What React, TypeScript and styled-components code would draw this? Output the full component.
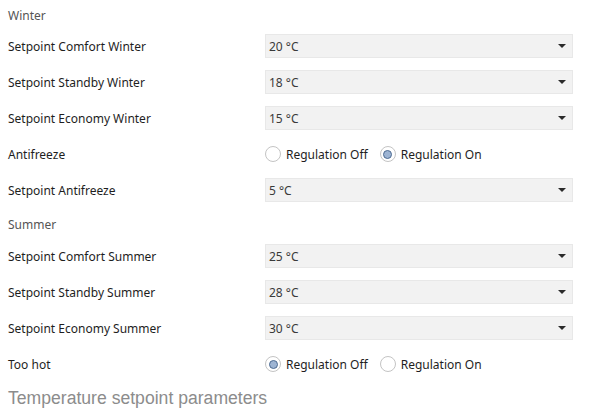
import React, { useState } from 'react';
import styled, { createGlobalStyle } from 'styled-components';

const GlobalStyle = createGlobalStyle`
  html, body {
    margin: 0;
    padding: 0;
    background: #ffffff;
  }
`;

const Page = styled.div`
  width: 607px;
  height: 409px;
  padding: 0 8px;
  box-sizing: border-box;
  font-family: 'Noto Sans', 'Open Sans', sans-serif;
  display: flex;
  flex-direction: column;
  overflow: hidden;
`;

const GroupTitle = styled.div<{ $height: number; $pad: number }>`
  height: ${(p) => p.$height}px;
  padding-top: ${(p) => p.$pad}px;
  box-sizing: border-box;
  font-size: 12px;
  color: #555555;
  display: flex;
  align-items: center;
`;

const Row = styled.div`
  height: 36px;
  display: grid;
  grid-template-columns: 257px 308px;
  align-items: center;
`;

const Label = styled.div`
  font-size: 12px;
  color: #1e1e1e;
`;

const Select = styled.div`
  height: 24px;
  box-sizing: border-box;
  background: #f2f2f2;
  border: 1px solid #e8e8e8;
  display: flex;
  align-items: center;
  justify-content: space-between;
  padding: 0 6px 0 3px;
  font-size: 12px;
  color: #3a3a3a;
`;

const Arrow = styled.span`
  width: 0;
  height: 0;
  border-left: 4px solid transparent;
  border-right: 4px solid transparent;
  border-top: 4px solid #2a2a2a;
`;

const RadioGroup = styled.div`
  display: flex;
  align-items: center;
  gap: 12px;
`;

const RadioOption = styled.label`
  display: flex;
  align-items: center;
  gap: 5px;
  font-size: 12px;
  color: #1e1e1e;
  cursor: pointer;
`;

const RadioCircle = styled.span<{ $checked: boolean }>`
  width: 16px;
  height: 16px;
  box-sizing: border-box;
  border-radius: 50%;
  border: 1px solid #c4c4c4;
  background: #ffffff;
  display: flex;
  align-items: center;
  justify-content: center;
  &::after {
    content: '';
    display: ${(p) => (p.$checked ? 'block' : 'none')};
    width: 9px;
    height: 9px;
    box-sizing: border-box;
    border-radius: 50%;
    border: 1px solid #4d6b91;
    background: #9db4d3;
  }
`;

const Caption = styled.div`
  flex: 1;
  display: flex;
  align-items: center;
  padding-top: 5px;
  font-family: 'Liberation Sans', Arial, sans-serif;
  font-size: 17.6px;
  color: #8c8c8c;
`;

type Field =
  | { kind: 'select'; label: string; value: string }
  | { kind: 'radio'; label: string; on: boolean };

const winter: Field[] = [
  { kind: 'select', label: 'Setpoint Comfort Winter', value: '20 °C' },
  { kind: 'select', label: 'Setpoint Standby Winter', value: '18 °C' },
  { kind: 'select', label: 'Setpoint Economy Winter', value: '15 °C' },
  { kind: 'radio', label: 'Antifreeze', on: true },
  { kind: 'select', label: 'Setpoint Antifreeze', value: '5 °C' },
];

const summer: Field[] = [
  { kind: 'select', label: 'Setpoint Comfort Summer', value: '25 °C' },
  { kind: 'select', label: 'Setpoint Standby Summer', value: '28 °C' },
  { kind: 'select', label: 'Setpoint Economy Summer', value: '30 °C' },
  { kind: 'radio', label: 'Too hot', on: false },
];

function Regulation({ initial }: { initial: boolean }) {
  const [on, setOn] = useState(initial);
  return (
    <RadioGroup>
      <RadioOption onClick={() => setOn(false)}>
        <RadioCircle $checked={!on} />
        Regulation Off
      </RadioOption>
      <RadioOption onClick={() => setOn(true)}>
        <RadioCircle $checked={on} />
        Regulation On
      </RadioOption>
    </RadioGroup>
  );
}

function FieldRow({ field }: { field: Field }) {
  return (
    <Row>
      <Label>{field.label}</Label>
      {field.kind === 'select' ? (
        <Select>
          {field.value}
          <Arrow />
        </Select>
      ) : (
        <Regulation initial={field.on} />
      )}
    </Row>
  );
}

export default function App() {
  return (
    <>
      <GlobalStyle />
      <Page>
        <GroupTitle $height={28} $pad={2}>Winter</GroupTitle>
        {winter.map((f) => (
          <FieldRow key={f.label} field={f} />
        ))}
        <GroupTitle $height={30} $pad={3}>Summer</GroupTitle>
        {summer.map((f) => (
          <FieldRow key={f.label} field={f} />
        ))}
        <Caption>Temperature setpoint parameters</Caption>
      </Page>
    </>
  );
}
